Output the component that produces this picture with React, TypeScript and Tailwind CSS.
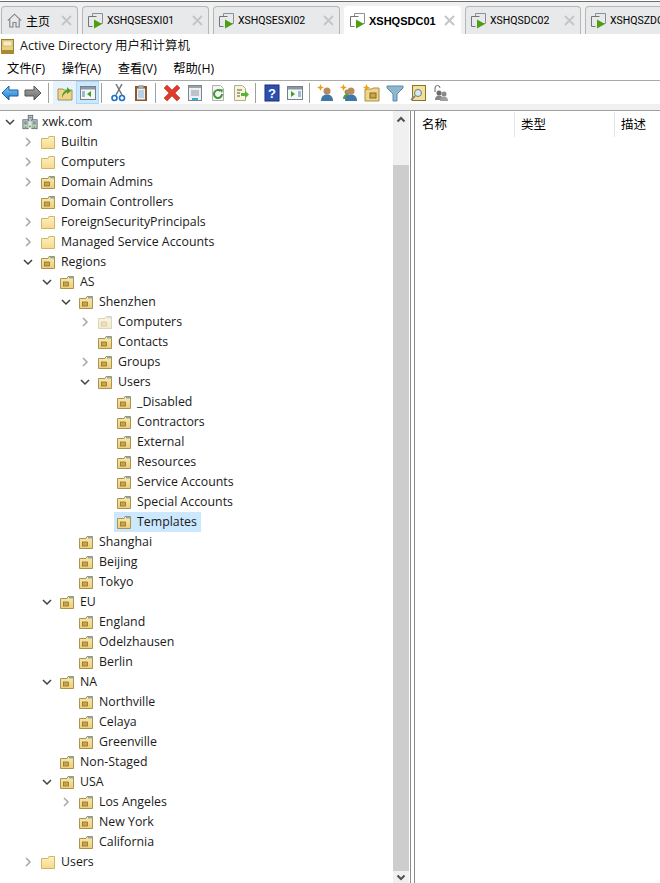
import type { ReactNode } from "react";

const UI_FONT = "font-['Open_Sans','Noto_Sans_CJK_SC',sans-serif]";

type Kind = "folder" | "ou" | "dim";
type Node = { label: string; level: number; kind: Kind; arrow?: "open" | "closed"; selected?: boolean };

const nodes: Node[] = [
  { label: "Builtin", level: 1, kind: "folder", arrow: "closed" },
  { label: "Computers", level: 1, kind: "folder", arrow: "closed" },
  { label: "Domain Admins", level: 1, kind: "ou", arrow: "closed" },
  { label: "Domain Controllers", level: 1, kind: "ou" },
  { label: "ForeignSecurityPrincipals", level: 1, kind: "folder", arrow: "closed" },
  { label: "Managed Service Accounts", level: 1, kind: "folder", arrow: "closed" },
  { label: "Regions", level: 1, kind: "ou", arrow: "open" },
  { label: "AS", level: 2, kind: "ou", arrow: "open" },
  { label: "Shenzhen", level: 3, kind: "ou", arrow: "open" },
  { label: "Computers", level: 4, kind: "dim", arrow: "closed" },
  { label: "Contacts", level: 4, kind: "ou" },
  { label: "Groups", level: 4, kind: "ou", arrow: "closed" },
  { label: "Users", level: 4, kind: "ou", arrow: "open" },
  { label: "_Disabled", level: 5, kind: "ou" },
  { label: "Contractors", level: 5, kind: "ou" },
  { label: "External", level: 5, kind: "ou" },
  { label: "Resources", level: 5, kind: "ou" },
  { label: "Service Accounts", level: 5, kind: "ou" },
  { label: "Special Accounts", level: 5, kind: "ou" },
  { label: "Templates", level: 5, kind: "ou", selected: true },
  { label: "Shanghai", level: 3, kind: "ou" },
  { label: "Beijing", level: 3, kind: "ou" },
  { label: "Tokyo", level: 3, kind: "ou" },
  { label: "EU", level: 2, kind: "ou", arrow: "open" },
  { label: "England", level: 3, kind: "ou" },
  { label: "Odelzhausen", level: 3, kind: "ou" },
  { label: "Berlin", level: 3, kind: "ou" },
  { label: "NA", level: 2, kind: "ou", arrow: "open" },
  { label: "Northville", level: 3, kind: "ou" },
  { label: "Celaya", level: 3, kind: "ou" },
  { label: "Greenville", level: 3, kind: "ou" },
  { label: "Non-Staged", level: 2, kind: "ou" },
  { label: "USA", level: 2, kind: "ou", arrow: "open" },
  { label: "Los Angeles", level: 3, kind: "ou", arrow: "closed" },
  { label: "New York", level: 3, kind: "ou" },
  { label: "California", level: 3, kind: "ou" },
  { label: "Users", level: 1, kind: "folder", arrow: "closed" },
];

function TabIcon() {
  return (
    <svg width="16" height="16" viewBox="0 0 16 16" className="shrink-0">
      <path d="M4.500 3.500V.5h10v10h-3" fill="none" stroke="#8a8f94" />
      <path d="M.5 3.500h8M.5 3.500v10h4" fill="none" stroke="#6f7479" />
      <path d="M6 6.500v9l8-4.500z" fill="#4f9d12" />
    </svg>
  );
}

function HomeIcon() {
  return (
    <svg width="15" height="15" viewBox="0 0 15 15" className="shrink-0">
      <path d="M.8 7.700 7.500 1.200l6.700 6.500M2.800 6.500v7.500h3.200V9.500h3v4.500h3.200V6.500" fill="none" stroke="#7d8388" strokeWidth="1.100" />
    </svg>
  );
}

function CloseX() {
  return (
    <svg width="11" height="11" viewBox="0 0 11 11" className="shrink-0">
      <path d="M1 1l9 9M10 1l-9 9" stroke="#c4c6c8" strokeWidth="2" />
    </svg>
  );
}

function Tab({ label, width, home, active }: { label: string; width: number; home?: boolean; active?: boolean }) {
  return (
    <div
      style={{ width }}
      className={`flex h-[28px] shrink-0 items-center rounded-t-[4px] border-x border-t pl-[5px] ${
        active ? "border-white bg-white" : "border-[#b4b6b8] bg-[#e8e9eb]"
      }`}
    >
      {home ? <HomeIcon /> : <TabIcon />}
      {active ? (
        <span className="ml-[3px] flex-1 truncate whitespace-nowrap font-['Liberation_Sans',sans-serif] text-[11px] font-bold text-black">{label}</span>
      ) : home ? (
        <span className="ml-[4px] flex-1 whitespace-nowrap font-['Noto_Sans_CJK_SC',sans-serif] text-[12px] text-black">{label}</span>
      ) : (
        <span className="ml-[3px] flex-1 truncate whitespace-nowrap font-['Roboto',sans-serif] text-[10.500px] text-black">{label}</span>
      )}
      <span className="mr-[5px]">
        <CloseX />
      </span>
    </div>
  );
}

function Folder({ kind }: { kind: Kind }) {
  const dim = kind === "dim";
  const top = dim ? "#fbf6e4" : kind === "ou" ? "#fbeab0" : "#fdf0bf";
  const bottom = dim ? "#f1e8cc" : kind === "ou" ? "#edcd78" : "#f6d98a";
  const edge = dim ? "#ddd5b8" : kind === "ou" ? "#ad9350" : "#d0b56c";
  const id = `folder-${kind}`;
  return (
    <svg width="16" height="16" viewBox="0 0 16 16" className="shrink-0">
      <defs>
        <linearGradient id={id} x1="0" y1="0" x2="0" y2="1">
          <stop offset="0" stopColor={top} />
          <stop offset="1" stopColor={bottom} />
        </linearGradient>
      </defs>
      <path d="M1.500 4.500V14.500H14.500V2.500H9L8 4.500z" fill={`url(#${id})`} stroke={edge} />
      {kind !== "folder" && (
        <>
          <path d="M10 3h4v1.500h-4z" fill={dim ? "#cfe4f2" : "#6fb2dd"} />
          <rect x="4.500" y="8" width="5" height="4" fill={dim ? "#ece2bf" : "#c9a64a"} stroke={dim ? "#d3c79d" : "#7f6a2b"} strokeWidth="0.700" />
        </>
      )}
    </svg>
  );
}

function Chevron({ open }: { open?: boolean }) {
  return (
    <svg width="10" height="10" viewBox="0 0 10 10">
      {open ? (
        <path d="M1 3l4 4 4-4" fill="none" stroke="#404040" strokeWidth="1.500" />
      ) : (
        <path d="M3 1l4 4-4 4" fill="none" stroke="#a6a6a6" strokeWidth="1.500" />
      )}
    </svg>
  );
}

function TreeRow({ node }: { node: Node }) {
  // each level is 19px deeper
  return (
    <div style={{ paddingLeft: 23 + (node.level - 1) * 19 }} className="flex h-5 items-center">
      <span className="flex w-[10px] justify-center">{node.arrow && <Chevron open={node.arrow === "open"} />}</span>
      <div className={`ml-[5px] flex h-5 items-center pl-[2px] pr-[4px] ${node.selected ? "bg-[#cce8ff]" : ""}`}>
        <Folder kind={node.kind} />
        <span className="ml-[5px] whitespace-nowrap">{node.label}</span>
      </div>
    </div>
  );
}

function DomainIcon() {
  return (
    <svg width="16" height="16" viewBox="0 0 18 16" className="shrink-0">
      <rect x="7" y="0.500" width="5" height="7" fill="#b8c4c6" stroke="#5f6b6d" />
      <rect x="1" y="5.500" width="6" height="10" fill="#c3cdcf" stroke="#5f6b6d" />
      <rect x="11" y="5.500" width="6" height="10" fill="#c3cdcf" stroke="#5f6b6d" />
      <rect x="7" y="7" width="4" height="8" fill="#dfe5e6" />
      <path d="M2.500 8h3M12.500 8h3M2.500 10h3M12.500 10h3M8.500 3h2" stroke="#566163" />
      <rect x="3" y="13" width="2" height="2" fill="#4cc02c" />
      <rect x="13" y="13" width="2" height="2" fill="#4cc02c" />
      <rect x="8" y="12" width="2" height="2" fill="#4cc02c" />
    </svg>
  );
}

function Btn({ children, active, hover }: { children: ReactNode; active?: boolean; hover?: boolean }) {
  return (
    <div className={`flex h-[23px] w-[23px] shrink-0 items-center justify-center ${active ? "border border-[#a8d8fb] bg-[#cce8ff]" : hover ? "bg-[#e5f3ff]" : ""}`}>
      {children}
    </div>
  );
}

function Sep({ wide }: { wide?: boolean }) {
  return <div className={`mr-[4px] h-[20px] w-px shrink-0 bg-[#a0a0a0] ${wide ? "ml-[3px]" : "ml-[2px]"}`} />;
}

function Ico({ children }: { children: ReactNode }) {
  return (
    <svg width="18" height="18" viewBox="0 0 18 18">
      {children}
    </svg>
  );
}

function Person({ x = 0, c = "#3f78a8" }: { x?: number; c?: string }) {
  return (
    <g transform={`translate(${x} 0)`}>
      <circle cx="10" cy="7" r="3.500" fill="#b98a5e" />
      <path d="M4 17c0-4 2-6.500 6-6.500s6 2.500 6 6.500z" fill={c} />
    </g>
  );
}

const Star = () => <path d="M3.500 0l1 2.500L7 3.500 4.500 4.500l-1 2.500-1-2.500L0 3.500l2.500-1z" fill="#f0a010" />;

function Toolbar() {
  return (
    <div className="-ml-[2px] flex h-[23px] items-center bg-white">
      <Btn>
        <Ico>
          <defs>
            <linearGradient id="back" x1="0" y1="0" x2="0" y2="1">
              <stop offset="0" stopColor="#7cc8f5" />
              <stop offset="1" stopColor="#1f7fd0" />
            </linearGradient>
          </defs>
          <path d="M1 9l7-7v4h9v6H8v4z" fill="url(#back)" stroke="#1c5f9e" />
        </Ico>
      </Btn>
      <Btn>
        <Ico>
          <defs>
            <linearGradient id="fwd" x1="0" y1="0" x2="0" y2="1">
              <stop offset="0" stopColor="#a8a8a8" />
              <stop offset="1" stopColor="#6e6e6e" />
            </linearGradient>
          </defs>
          <path d="M17 9l-7-7v4H1v6h9v4z" fill="url(#fwd)" stroke="#555" />
        </Ico>
      </Btn>
      <div className="w-[2px] shrink-0" />
      <Sep />
      <Btn hover>
        <Ico>
          <path d="M2 5h5l1 1h8v10H2z" fill="#f0d48a" stroke="#a98f4a" />
          <path d="M6 14c0-5 2-7 5-8V3l4 4-4 3V8c-2 1-4 3-5 6z" fill="#4f9d2a" />
        </Ico>
      </Btn>
      <Btn active>
        <Ico>
          <rect x="1.500" y="2.500" width="15" height="13" fill="#f4f6f8" stroke="#75818a" />
          <rect x="2" y="3" width="14" height="2.500" fill="#8c99a3" />
          <path d="M3 8h3M3 10h3M3 12h3" stroke="#4a7fa8" />
          <path d="M12 7v6l-4-3z" fill="#3ea02a" />
        </Ico>
      </Btn>
      <Sep />
      <Btn>
        <Ico>
          <path d="M13 0 7 11M7 0l6 11" stroke="#70767a" strokeWidth="1.500" />
          <circle cx="5.500" cy="14" r="2.500" fill="none" stroke="#1d6fd0" strokeWidth="1.600" />
          <circle cx="13" cy="14" r="2.500" fill="none" stroke="#1d6fd0" strokeWidth="1.600" />
        </Ico>
      </Btn>
      <Btn>
        <Ico>
          <rect x="3" y="2" width="12" height="15" fill="#8b5a2f" />
          <rect x="5" y="4.500" width="8" height="11" fill="#e8f2fa" />
          <path d="M6 7h6M6 9h6M6 11h6M6 13h6" stroke="#8fb0cc" />
          <rect x="6.500" y="1" width="5" height="3" fill="#a7adb2" />
        </Ico>
      </Btn>
      <Sep wide />
      <Btn>
        <Ico>
          <path d="M1 4l3-3 5 5 5-5 3 3-5 5 5 5-3 3-5-5-5 5-3-3 5-5z" fill="#e03a2a" stroke="#b02a20" strokeWidth="0.500" />
        </Ico>
      </Btn>
      <Btn>
        <Ico>
          <rect x="2.500" y="1.500" width="13" height="15" fill="#eef0f2" stroke="#7d868c" />
          <rect x="3" y="2" width="12" height="2" fill="#9aa4ab" />
          <path d="M5 7h8M5 9h8M5 11h8" stroke="#8c959b" />
          <rect x="6" y="14" width="6" height="2" fill="#3aaad8" />
        </Ico>
      </Btn>
      <Btn>
        <Ico>
          <path d="M3.500 1.500h8l3 3v12h-11z" fill="#f6f6f4" stroke="#b0b0b0" />
          <path d="M13 10a4 4 0 1 1-1.500-3.100" fill="none" stroke="#3c9a34" strokeWidth="2" />
          <path d="M10 5l4 .5-1 3.500z" fill="#3c9a34" />
        </Ico>
      </Btn>
      <Btn>
        <Ico>
          <path d="M2.500 1.500h8l3 3v12h-11z" fill="#faf4d8" stroke="#b3ad8c" />
          <path d="M5 6h5M5 9h3M5 12h3" stroke="#555" />
          <path d="M9 9h4V6.500l4 4-4 4V12H9z" fill="#56b33c" />
        </Ico>
      </Btn>
      <Sep wide />
      <Btn>
        <Ico>
          <rect x="2" y="1" width="14" height="16" fill="#2c4fb0" stroke="#1b2f78" />
          <text x="9" y="14" textAnchor="middle" fontSize="13" fontWeight="700" fontFamily="Liberation Sans" fill="#fff">?</text>
        </Ico>
      </Btn>
      <Btn>
        <Ico>
          <rect x="1.500" y="2.500" width="15" height="13" fill="#f4f6f8" stroke="#75818a" />
          <rect x="2" y="3" width="14" height="2.500" fill="#8c99a3" />
          <path d="M5 7v6l4-3z" fill="#3ea02a" />
          <path d="M12 8h3M12 10h3M12 12h3" stroke="#4a7fa8" />
        </Ico>
      </Btn>
      <Sep wide />
      <Btn>
        <Ico>
          <Person />
          <Star />
        </Ico>
      </Btn>
      <Btn>
        <Ico>
          <circle cx="7" cy="8" r="2.500" fill="#a98a5e" />
          <path d="M3 15c0-3 1.500-5 4-5s4 2 4 5z" fill="#4f9d3a" />
          <Person x={1} />
          <Star />
        </Ico>
      </Btn>
      <Btn>
        <Ico>
          <path d="M2 5h7l1-1h6v13H2z" fill="#f0d48a" stroke="#a98f4a" />
          <rect x="7" y="9" width="6" height="5" fill="#c9a64a" stroke="#7f6a2b" />
          <Star />
        </Ico>
      </Btn>
      <Btn>
        <Ico>
          <path d="M1 2h16v2l-6 6v7H7v-7L1 4z" fill="#8fb8d0" stroke="#5d8aa8" />
        </Ico>
      </Btn>
      <Btn>
        <Ico>
          <rect x="3.500" y="1.500" width="13" height="15" fill="#f4e09a" stroke="#8e7420" />
          <circle cx="9" cy="9" r="3.500" fill="#d8eaf4" stroke="#6c7c88" />
          <path d="M6 12l-4 4" stroke="#888" strokeWidth="2" />
        </Ico>
      </Btn>
      <Btn>
        <Ico>
          <path d="M3 8V4a2.500 2.500 0 0 1 5 0" fill="none" stroke="#666" />
          <circle cx="7" cy="9" r="2.500" fill="#6c6c6c" />
          <path d="M3 16c0-3 1.500-4.500 4-4.500s4 1.500 4 4.500z" fill="#858585" />
          <circle cx="12" cy="10" r="2.500" fill="#8a8a8a" />
          <path d="M8 17c0-3 1.500-4.500 4-4.500s4 1.500 4 4.500z" fill="#a0a0a0" />
        </Ico>
      </Btn>
    </div>
  );
}

export default function App() {
  return (
    <div className={`h-[883px] w-[660px] overflow-hidden bg-white text-[12.350px] leading-5 text-[#1a1a1a] ${UI_FONT}`}>
      <div className="mt-px flex h-[33px] items-end gap-[4px] overflow-hidden border-t border-[#6e6e6e] bg-[#f0f0f0] pl-[1px]">
        <Tab label="主页" width={77} home />
        <Tab label="XSHQSESXI01" width={127} />
        <Tab label="XSHQSESXI02" width={127} />
        <Tab label="XSHQSDC01" width={117} active />
        <Tab label="XSHQSDC02" width={116} />
        <Tab label="XSHQSZDC01" width={116} />
      </div>

      <div className="flex h-[24px] items-center bg-white pl-[1px]">
        <svg width="13" height="15" viewBox="0 0 13 15" className="shrink-0">
          <rect x="0.500" y="0.500" width="12" height="14" fill="#e8cf82" stroke="#9a8030" />
          <rect x="2" y="2" width="9" height="5" fill="#f8ecc0" stroke="#b8a050" strokeWidth="0.500" />
          <rect x="0" y="11" width="13" height="4" fill="#a88a30" />
        </svg>
        <span className="ml-[6px] text-[12.500px]">Active Directory 用户和计算机</span>
      </div>

      <div className="flex h-[22px] items-center gap-[16.600px] pl-[7px] text-[12.250px] text-black">
        <span>文件(F)</span>
        <span>操作(A)</span>
        <span>查看(V)</span>
        <span>帮助(H)</span>
      </div>

      <div className="border-t border-[#a9a9a9]">
        <Toolbar />
      </div>

      <div className="h-[7px] border-b border-[#a0a0a0] bg-[#f0f0f0]" />

      <div className="flex h-[772px] items-stretch bg-white">
        <div className="flex w-[411px] shrink-0 border-r border-[#8a8a8a] pr-[1px]">
          <div className="flex-1 overflow-hidden pt-px">
            <div className="flex h-5 items-center pl-[5px]">
              <span className="flex w-[10px] justify-center">
                <Chevron open />
              </span>
              <span className="ml-[7px]">
                <DomainIcon />
              </span>
              <span className="ml-[4px]">xwk.com</span>
            </div>
            {nodes.map((node, i) => (
              <TreeRow key={i} node={node} />
            ))}
          </div>
          <div className="flex w-[16px] shrink-0 flex-col bg-[#f0f0f0]">
            <div className="flex h-[17px] items-center justify-center">
              <svg width="10" height="7" viewBox="0 0 10 7">
                <path d="M1.500 5.500 5 2l3.500 3.500" fill="none" stroke="#505050" strokeWidth="2" />
              </svg>
            </div>
            <div className="mt-[37px] flex-1 bg-[#cdcdcd]" />
            <div className="flex h-[12px] items-center justify-center">
              <svg width="10" height="7" viewBox="0 0 10 7">
                <path d="M1.500 1.500 5 5l3.500-3.500" fill="none" stroke="#505050" strokeWidth="2" />
              </svg>
            </div>
          </div>
        </div>
        <div className="ml-[3px] flex-1 border-l border-[#8a8a8a]">
          <div className="flex h-[26px] pt-px text-[12.500px] text-black">
            <div className="w-[100px] shrink-0 border-r border-[#e5e5e5] pl-[7px] leading-[25px]">名称</div>
            <div className="w-[100px] shrink-0 border-r border-[#e5e5e5] pl-[6px] leading-[25px]">类型</div>
            <div className="pl-[6px] leading-[25px]">描述</div>
          </div>
        </div>
      </div>
    </div>
  );
}
